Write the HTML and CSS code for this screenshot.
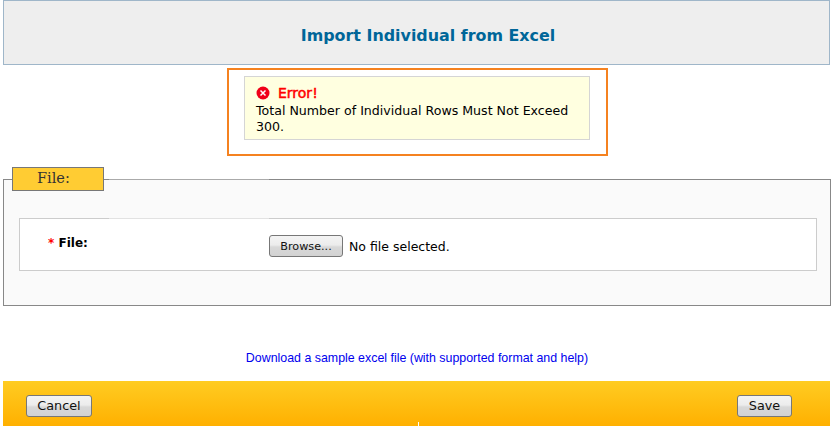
FILE: index.html
```html
<!DOCTYPE html>
<html lang="en">
<head>
<meta charset="utf-8">
<title>Import Individual from Excel</title>
<link rel="stylesheet" href="styles.css">
</head>
<body>
<div class="page">
  <header class="header"><h1 class="title">Import Individual from Excel</h1></header>
  <div class="error-wrap">
    <div class="error-box">
      <div class="error-head">
        <svg class="error-icon" width="14" height="14" viewBox="0 0 14 14" aria-hidden="true">
          <circle cx="7" cy="7" r="6.5" fill="#f00018"/>
          <path d="M4.5 4.5l5 5M9.5 4.5l-5 5" stroke="#fff" stroke-width="1.5" fill="none"/>
        </svg>
        <span class="error-title">Error!</span>
      </div>
      <div class="error-text">Total Number of Individual Rows Must Not Exceed 300.</div>
    </div>
  </div>
  <section class="panel">
    <div class="legend">File:</div>
    <div class="row">
      <div class="label"><span class="req">*</span> File:</div>
      <div class="field"><button class="btn browse" type="button">Browse...</button><span class="nofile">No file selected.</span></div>
    </div>
  </section>
  <div class="sample"><a class="sample-link" href="#">Download a sample excel file (with supported format and help)</a></div>
  <footer class="footer">
    <button class="btn cancel" type="button">Cancel</button>
    <button class="btn save" type="button">Save</button>
  </footer>
</div>
</body>
</html>
```
FILE: styles.css
```css
* { box-sizing: border-box; }
html, body { margin: 0; padding: 0; background: #fff; overflow: hidden; }
body { width: 833px; height: 426px; font-family: "DejaVu Sans", sans-serif; font-size: 12.6px; color: #000; }
.page { padding: 0 3px; width: 833px; }
.header {
  width: 827px; height: 65px; background: #eeeeee; border: 1px solid #9fb6c9;
  display: flex; align-items: center; justify-content: center; padding-left: 23px;
}
.title { margin: 6px 0 0 0; font-size: 15.9px; line-height: 20px; font-weight: bold; color: #006699; }
.error-wrap {
  width: 381px; height: 88px; margin: 3px 0 0 224px; border: 2px solid #f58220; padding: 6px 0 0 15px;
}
.error-box {
  width: 346px; height: 64px; background: #ffffe0; border: 1px solid #d5d5d5; padding: 7px 11px 0;
}
.error-head { display: flex; align-items: center; height: 17px; }
.error-icon { margin-right: 8px; flex: none; }
.error-title { color: #f00; font-size: 14px; -webkit-text-stroke: 0.5px #f00; }
.error-text { font-size: 12.6px; line-height: 16px; margin-top: 2px; }
.panel {
  position: relative; width: 828px; height: 127px; margin-top: 23px;
  background: #fafafa; border: 1px solid #888; padding: 38px 15px 0;
}
.panel::before {
  content: ""; position: absolute; left: 105px; top: -1px; width: 160px; height: 1px; background: #aaa;
}
.legend {
  position: absolute; left: 8px; top: -13px; width: 92px; height: 24px;
  background: #ffcc33; border: 1px solid #777; font-family: "DejaVu Serif", serif; font-size: 14.5px;
  line-height: 21px; padding-left: 24px; color: #333;
}
.row {
  position: relative; width: 798px; height: 53px; background: #fff; border: 1px solid #ccc;
  display: flex;
}
.row::before {
  content: ""; position: absolute; left: 89px; top: -1px; width: 160px; height: 1px; background: #e2e2e2;
}
.label { width: 249px; padding: 16px 0 0 28px; font-size: 12px; line-height: 16px; font-weight: bold; }
.req { color: #f00; }
.field { display: flex; align-items: center; height: 22px; margin-top: 16px; }
.nofile { margin-left: 6px; font-size: 12.5px; }
.btn {
  height: 22px; padding: 0; border: 1px solid #777; border-radius: 3px; color: #111;
  background: linear-gradient(#f4f4f4 0%, #ececec 45%, #d8d8d8 55%, #d2d2d2 100%);
  font-family: "DejaVu Sans", sans-serif; font-size: 12.8px; line-height: 18px;
}
.browse { width: 74px; font-size: 11.2px; padding-top: 2px; }
.sample { height: 75px; padding-top: 44px; text-align: center; font-family: "Liberation Sans", sans-serif; font-size: 12.4px; line-height: 16px; }
.sample-link { color: #0000ee; text-decoration: none; margin-left: 1px; }
.footer {
  position: relative; width: 827px; height: 45px; background: linear-gradient(#ffcc22, #ffb000);
  display: flex; justify-content: space-between; align-items: flex-start; padding: 14px 38px 0 23px;
}
.footer::after {
  content: ""; position: absolute; left: 415px; bottom: 0; width: 1px; height: 4px; background: #fff;
}
.cancel { width: 66px; }
.save { width: 55px; }
```
